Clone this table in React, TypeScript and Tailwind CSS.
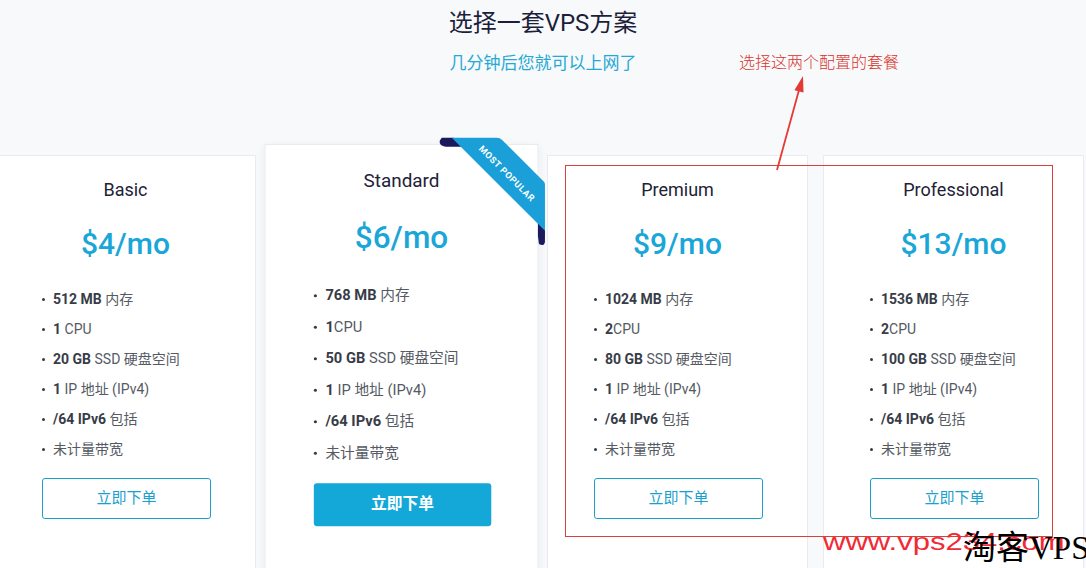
import React from "react";

const plans = [
  { name: "Basic", price: "$4/mo", mem: "512 MB", cpu: "1", cpuGap: true, disk: "20 GB" },
  { name: "Standard", price: "$6/mo", mem: "768 MB", cpu: "1", cpuGap: false, disk: "50 GB", featured: true },
  { name: "Premium", price: "$9/mo", mem: "1024 MB", cpu: "2", cpuGap: false, disk: "80 GB" },
  { name: "Professional", price: "$13/mo", mem: "1536 MB", cpu: "2", cpuGap: false, disk: "100 GB" },
];

function Ribbon() {
  return (
    <svg
      className="absolute top-[-9.5px] right-[-10px] w-[105px] h-[107px] overflow-visible"
      viewBox="0 0 110 112"
    >
      {/* folded ends */}
      <path d="M4 2 L16 2 L25 11 L8 11 Q1 10 2 5 Z" fill="#1b1a5c" />
      <path d="M100 87 L107 94 L107 106 Q106 111 101 108 L100 100 Z" fill="#1b1a5c" />
      {/* band */}
      <path d="M14 2 L59 2 Q62 2 64 4 L106 46 Q107 47 107 49 L107 95 Z" fill="#1a9fd8" />
      <text
        x="69"
        y="38"
        transform="rotate(45 69 38)"
        textAnchor="middle"
        dominantBaseline="central"
        fill="#fff"
        fontSize="9"
        fontWeight="700"
        letterSpacing="0.6"
        fontFamily="Roboto, sans-serif"
      >
        MOST POPULAR
      </text>
    </svg>
  );
}

function PlanCard({ plan }: { plan: (typeof plans)[number] }) {
  const items = [
    { b: plan.mem, t: " 内存" },
    { b: plan.cpu, t: plan.cpuGap ? " CPU" : "CPU" },
    { b: plan.disk, t: " SSD 硬盘空间" },
    { b: "1", t: " IP 地址 (IPv4)" },
    { b: "/64 IPv6", t: " 包括" },
    { b: "", t: "未计量带宽" },
  ];
  return (
    <div
      className={
        "relative w-[261px] h-[440px] shrink-0 bg-white border border-[#e9ebef] px-[46px] pt-[22px] " +
        (plan.featured ? "scale-105 z-10 shadow-[0_2px_8px_rgba(0,0,0,0.06)]" : "")
      }
    >
      {plan.featured && <Ribbon />}
      <div className="text-center text-[18px] leading-[24px] text-[#1e2236]">{plan.name}</div>
      <div className="mt-[24px] text-center text-[30px] leading-[36px] font-medium text-[#1aa6d8]">
        {plan.price}
      </div>
      <ul className="mt-[22px]">
        {items.map((it, i) => (
          <li key={i} className="flex items-center h-[30px] text-[14px] text-[#555a63]">
            <span className="w-[3px] h-[3px] rounded-full bg-[#333a48] mr-[8px]" />
            <span className="whitespace-pre">
              {it.b && <b className="font-bold text-[#373c47]">{it.b}</b>}
              {it.t}
            </span>
          </li>
        ))}
      </ul>
      <button
        className={
          "mt-[14px] w-[169px] h-[41px] rounded-[3px] text-[15px] " +
          (plan.featured
            ? "bg-[#13a8d8] text-white font-bold"
            : "border border-[#1b9fc6] text-[#1aa0cc] bg-white")
        }
      >
        立即下单
      </button>
    </div>
  );
}

export default function App() {
  return (
    <div className="relative w-full h-[568px] overflow-hidden bg-[#f8f9fb] font-[Roboto,'Noto_Sans_CJK_SC',sans-serif]">
      {/* Header */}
      <div className="pt-[7px] text-center">
        <h2 className="text-[24px] leading-[32px] text-[#1c1f3b]">选择一套VPS方案</h2>
        <p className="mt-[12px] text-[17px] leading-[24px] text-[#26a9d5]">几分钟后您就可以上网了</p>
      </div>

      {/* Plans */}
      <div className="mt-[80px] ml-[-5px] flex gap-[15px] w-max">
        {plans.map((p) => (
          <PlanCard key={p.name} plan={p} />
        ))}
      </div>

      {/* Annotation */}
      <div className="absolute left-[739px] top-[50px] text-[16px] leading-[22px] text-[#d9342b] font-['Noto_Sans_CJK_SC',sans-serif] font-light">
        选择这两个配置的套餐
      </div>
      <svg className="absolute left-[770px] top-[70px] w-[40px] h-[105px]" viewBox="0 0 40 105">
        <line x1="7" y1="100" x2="29" y2="20" stroke="#e53935" strokeWidth="1.8" />
        <polygon points="33,6 33.5,22.6 24.4,20.2" fill="#e53935" />
      </svg>
      <div className="absolute left-[565px] top-[165px] w-[488px] h-[372px] border border-[#d6403f] pointer-events-none" />

      {/* Watermark */}
      <div className="absolute left-[823px] top-[528px] text-[23px] leading-[28px] text-[#f22a35] font-['Liberation_Sans',sans-serif] scale-x-[1.35] origin-left whitespace-nowrap">
        www.vps234.com
      </div>
      <div className="absolute left-[963px] top-[528px] text-[33px] leading-[40px] text-black font-['Liberation_Serif','Noto_Sans_CJK_SC',serif] whitespace-nowrap">
        淘客VPS
      </div>
    </div>
  );
}
